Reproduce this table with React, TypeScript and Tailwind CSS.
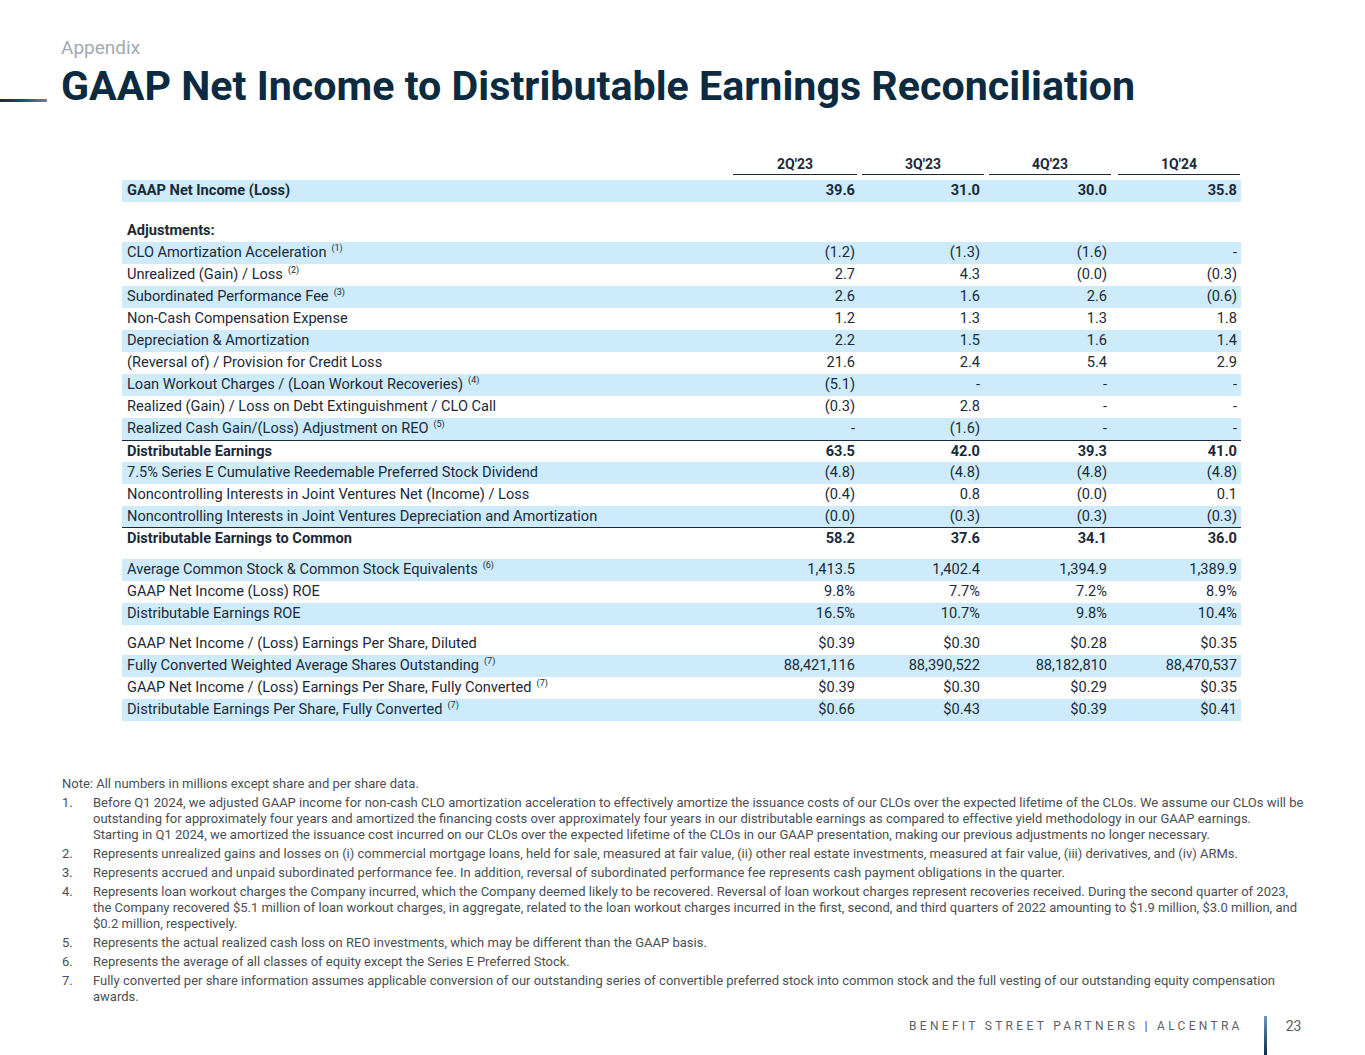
import React from 'react';

type Row = {
  label: string;
  note?: string;
  values: string[];
  band?: boolean;
  bold?: boolean;
  topRule?: boolean;
  bottomRule?: boolean;
};

const headers = ["2Q'23", "3Q'23", "4Q'23", "1Q'24"];

const adjustments: Row[] = [
  { label: 'CLO Amortization Acceleration', note: '(1)', values: ['(1.2)', '(1.3)', '(1.6)', '-'], band: true },
  { label: 'Unrealized (Gain) / Loss', note: '(2)', values: ['2.7', '4.3', '(0.0)', '(0.3)'] },
  { label: 'Subordinated Performance Fee', note: '(3)', values: ['2.6', '1.6', '2.6', '(0.6)'], band: true },
  { label: 'Non-Cash Compensation Expense', values: ['1.2', '1.3', '1.3', '1.8'] },
  { label: 'Depreciation & Amortization', values: ['2.2', '1.5', '1.6', '1.4'], band: true },
  { label: '(Reversal of) / Provision for Credit Loss', values: ['21.6', '2.4', '5.4', '2.9'] },
  { label: 'Loan Workout Charges / (Loan Workout Recoveries)', note: '(4)', values: ['(5.1)', '-', '-', '-'], band: true },
  { label: 'Realized (Gain) / Loss on Debt Extinguishment / CLO Call', values: ['(0.3)', '2.8', '-', '-'] },
  { label: 'Realized Cash Gain/(Loss) Adjustment on REO', note: '(5)', values: ['-', '(1.6)', '-', '-'], band: true },
  { label: 'Distributable Earnings', values: ['63.5', '42.0', '39.3', '41.0'], bold: true, topRule: true },
  { label: '7.5% Series E Cumulative Reedemable Preferred Stock Dividend', values: ['(4.8)', '(4.8)', '(4.8)', '(4.8)'], band: true },
  { label: 'Noncontrolling Interests in Joint Ventures Net (Income) / Loss', values: ['(0.4)', '0.8', '(0.0)', '0.1'] },
  { label: 'Noncontrolling Interests in Joint Ventures Depreciation and Amortization', values: ['(0.0)', '(0.3)', '(0.3)', '(0.3)'], band: true, bottomRule: true },
  { label: 'Distributable Earnings to Common', values: ['58.2', '37.6', '34.1', '36.0'], bold: true },
];

const ratios: Row[] = [
  { label: 'Average Common Stock & Common Stock Equivalents', note: '(6)', values: ['1,413.5', '1,402.4', '1,394.9', '1,389.9'], band: true },
  { label: 'GAAP Net Income (Loss) ROE', values: ['9.8%', '7.7%', '7.2%', '8.9%'] },
  { label: 'Distributable Earnings ROE', values: ['16.5%', '10.7%', '9.8%', '10.4%'], band: true },
];

const perShare: Row[] = [
  { label: 'GAAP Net Income / (Loss) Earnings Per Share, Diluted', values: ['$0.39', '$0.30', '$0.28', '$0.35'] },
  { label: 'Fully Converted Weighted Average Shares Outstanding', note: '(7)', values: ['88,421,116', '88,390,522', '88,182,810', '88,470,537'], band: true },
  { label: 'GAAP Net Income / (Loss) Earnings Per Share, Fully Converted', note: '(7)', values: ['$0.39', '$0.30', '$0.29', '$0.35'] },
  { label: 'Distributable Earnings Per Share, Fully Converted', note: '(7)', values: ['$0.66', '$0.43', '$0.39', '$0.41'], band: true },
];

const notes: React.ReactNode[] = [
  <>
    Before Q1 2024, we adjusted GAAP income for non-cash CLO amortization acceleration to effectively amortize the issuance costs of our CLOs over the expected lifetime of the CLOs. We assume our CLOs will be outstanding for approximately four years and amortized the financing costs over approximately four years in our distributable earnings as compared to effective yield methodology in our GAAP earnings.
    <br />
    Starting in Q1 2024, we amortized the issuance cost incurred on our CLOs over the expected lifetime of the CLOs in our GAAP presentation, making our previous adjustments no longer necessary.
  </>,
  'Represents unrealized gains and losses on (i) commercial mortgage loans, held for sale, measured at fair value, (ii) other real estate investments, measured at fair value, (iii) derivatives, and (iv) ARMs.',
  'Represents accrued and unpaid subordinated performance fee. In addition, reversal of subordinated performance fee represents cash payment obligations in the quarter.',
  'Represents loan workout charges the Company incurred, which the Company deemed likely to be recovered. Reversal of loan workout charges represent recoveries received.  During the second quarter of 2023, the Company recovered $5.1 million of loan workout charges, in aggregate, related to the loan workout charges incurred in the first, second, and third quarters of 2022 amounting to $1.9 million, $3.0 million, and $0.2 million, respectively.',
  'Represents the actual realized cash loss on REO investments, which may be different than the GAAP basis.',
  'Represents the average of all classes of equity except the Series E Preferred Stock.',
  'Fully converted per share information assumes applicable conversion of our outstanding series of convertible preferred stock into common stock and the full vesting of our outstanding equity compensation awards.',
];

const grid = 'grid grid-cols-[611px_126px_125px_127px_130px]';

function TableRow({ row }: { row: Row }) {
  return (
    <div
      className={`${grid} h-[22px] items-center ${row.band ? 'bg-[#cdebfb]' : ''} ${
        row.bold ? 'font-bold' : ''
      } ${row.topRule ? 'border-t border-[#1b2a38]' : ''} ${row.bottomRule ? 'border-b border-[#1b2a38]' : ''}`}
    >
      <div className="pl-[5px] whitespace-nowrap">
        {row.label}
        {row.note && <span className="ml-[5px] text-[9px] relative -top-[6px]">{row.note}</span>}
      </div>
      {row.values.map((v, i) => (
        <div key={i} className="text-right pr-[4px] whitespace-nowrap">
          {v}
        </div>
      ))}
    </div>
  );
}

export default function App() {
  return (
    <div className="w-[1365px] h-[1055px] bg-white flex flex-col overflow-hidden font-['Roboto',sans-serif] text-[#1b2a38]">
      {/* heading */}
      <div className="pl-[61px] pt-[37px] text-[19px] leading-[22px] text-[#a3aab0]">Appendix</div>
      <div className="flex items-end mt-[3px]">
        <div className="w-[47px] h-[3px] mb-[8px] bg-gradient-to-r from-[#0d2d4a] via-[#1d4f7c] to-[#5c88b3]" />
        <h1 className="ml-[14px] text-[41.2px] leading-[48px] font-bold text-[#0c2b40]">
          GAAP Net Income to Distributable Earnings Reconciliation
        </h1>
      </div>

      {/* table */}
      <div className="ml-[122px] w-[1119px] mt-[42px] text-[14.6px]">
        <div className={`${grid} font-bold text-[14px] leading-[18px]`}>
          <div />
          <div className="mr-[2px] text-center border-b border-[#1b2a38] pt-[3px] pb-[1px]">{headers[0]}</div>
          <div className="ml-[3px] text-center border-b border-[#1b2a38] pt-[3px] pb-[1px]">{headers[1]}</div>
          <div className="ml-[5px] text-center border-b border-[#1b2a38] pt-[3px] pb-[1px]">{headers[2]}</div>
          <div className="ml-[7px] mr-[1px] text-center border-b border-[#1b2a38] pt-[3px] pb-[1px]">{headers[3]}</div>
        </div>
        <div className="mt-[5px]">
          <TableRow row={{ label: 'GAAP Net Income (Loss)', values: ['39.6', '31.0', '30.0', '35.8'], band: true, bold: true }} />
        </div>
        <div className="mt-[18px] h-[22px] flex items-center pl-[5px] font-bold">Adjustments:</div>
        {adjustments.map((r) => (
          <TableRow key={r.label} row={r} />
        ))}
        <div className="mt-[9px]">
          {ratios.map((r) => (
            <TableRow key={r.label} row={r} />
          ))}
        </div>
        <div className="mt-[8px]">
          {perShare.map((r) => (
            <TableRow key={r.label} row={r} />
          ))}
        </div>
      </div>

      {/* footnotes */}
      <div className="ml-[62px] w-[1245px] mt-[55px] text-[13px] leading-[16px] text-[#4a4f54]">
        <p>Note: All numbers in millions except share and per share data.</p>
        <ol className="mt-[3px] flex flex-col gap-[3px]">
          {notes.map((n, i) => (
            <li key={i} className="flex">
              <span className="w-[31px] shrink-0">{i + 1}.</span>
              <span>{n}</span>
            </li>
          ))}
        </ol>
      </div>

      {/* footer */}
      <div className="mt-auto flex items-start h-[39px]">
        <div className="ml-[909px] mt-[1px] text-[12px] tracking-[3.3px] text-[#5d6166] whitespace-nowrap">
          BENEFIT STREET PARTNERS <span className="font-bold">|</span> ALCENTRA
        </div>
        <div className="ml-[21px] w-[3px] h-[39px] bg-gradient-to-b from-[#6a9cc8] to-[#0d2d4a]" />
        <div className="ml-[19px] text-[14px] text-[#5d6166]">23</div>
      </div>
    </div>
  );
}
